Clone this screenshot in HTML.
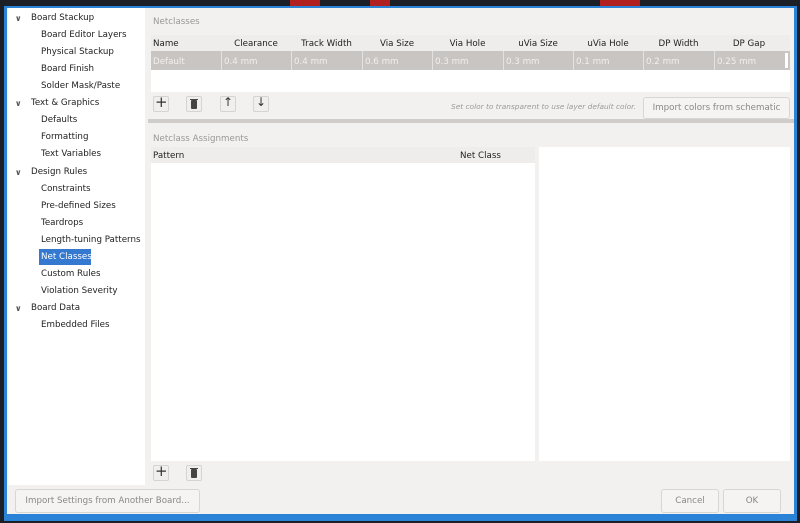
<!DOCTYPE html>
<html><head><style>
*{margin:0;padding:0;box-sizing:border-box}
body{width:800px;height:523px;background:#1c1f26;position:relative;overflow:hidden;font-family:"DejaVu Sans","Liberation Sans",sans-serif;font-size:8.7px;color:#222}
.a{position:absolute}
.dlg{left:4px;top:6px;width:793px;height:515px;background:#2a83d6}
.in{left:7px;top:8px;width:787px;height:506px;background:#f3f1f0}
.left{left:8px;top:8px;width:137px;height:477px;background:#fff}
.t{position:absolute;white-space:nowrap}
.chev{position:absolute;font-size:8px;color:#555;font-weight:bold}
.btn{position:absolute;border:1px solid #d8d5d2;border-radius:3px;background:#f6f4f3;color:#888;text-align:center}
.ib{position:absolute;width:16px;height:16px;border:1px solid #d6d3d0;border-radius:2px;background:#f1efee}
.th{position:absolute;top:39px;text-align:center;color:#222}
.td{position:absolute;top:57px;color:#f2f0ef}
.vl{position:absolute;top:51px;width:1px;height:19px;background:#e4e2e0}
</style></head><body>
<div class="a" style="left:290px;top:0;width:30px;height:6px;background:#b02020"></div>
<div class="a" style="left:370px;top:0;width:20px;height:6px;background:#b02020"></div>
<div class="a" style="left:600px;top:0;width:40px;height:6px;background:#b02020"></div>
<div class="a dlg"></div>
<div class="a in"></div>
<div class="a left"></div>

<span class="chev" style="left:15px;top:14px">&#8744;</span><span class="t" style="left:31px;top:13px">Board Stackup</span>
<span class="t" style="left:41px;top:30px">Board Editor Layers</span>
<span class="t" style="left:41px;top:47px">Physical Stackup</span>
<span class="t" style="left:41px;top:64px">Board Finish</span>
<span class="t" style="left:41px;top:81px">Solder Mask/Paste</span>
<span class="chev" style="left:15px;top:99px">&#8744;</span><span class="t" style="left:31px;top:98px">Text &amp; Graphics</span>
<span class="t" style="left:41px;top:115px">Defaults</span>
<span class="t" style="left:41px;top:132px">Formatting</span>
<span class="t" style="left:41px;top:149px">Text Variables</span>
<span class="chev" style="left:15px;top:168px">&#8744;</span><span class="t" style="left:31px;top:167px">Design Rules</span>
<span class="t" style="left:41px;top:184px">Constraints</span>
<span class="t" style="left:41px;top:201px">Pre-defined Sizes</span>
<span class="t" style="left:41px;top:218px">Teardrops</span>
<span class="t" style="left:41px;top:235px">Length-tuning Patterns</span>
<div class="a" style="left:39px;top:249px;width:52px;height:16px;background:#3478d0"></div>
<span class="t" style="left:41px;top:252px;color:#fff">Net Classes</span>
<span class="t" style="left:41px;top:269px">Custom Rules</span>
<span class="t" style="left:41px;top:286px">Violation Severity</span>
<span class="chev" style="left:15px;top:304px">&#8744;</span><span class="t" style="left:31px;top:303px">Board Data</span>
<span class="t" style="left:41px;top:320px">Embedded Files</span>

<span class="t" style="left:153px;top:17px;color:#9a9796">Netclasses</span>
<div class="a" style="left:151px;top:35px;width:639px;height:16px;background:#efedec"></div>
<div class="a" style="left:151px;top:51px;width:639px;height:19px;background:#c8c5c2"></div>
<div class="a" style="left:151px;top:70px;width:639px;height:22px;background:#fff"></div>
<span class="t" style="left:153px;top:39px">Name</span>
<span class="th" style="left:221px;width:70px">Clearance</span>
<span class="th" style="left:291px;width:71px">Track Width</span>
<span class="th" style="left:362px;width:70px">Via Size</span>
<span class="th" style="left:432px;width:71px">Via Hole</span>
<span class="th" style="left:503px;width:70px">uVia Size</span>
<span class="th" style="left:573px;width:70px">uVia Hole</span>
<span class="th" style="left:643px;width:71px">DP Width</span>
<span class="th" style="left:714px;width:70px">DP Gap</span>
<div class="vl" style="left:221px"></div><div class="vl" style="left:291px"></div><div class="vl" style="left:362px"></div><div class="vl" style="left:432px"></div><div class="vl" style="left:503px"></div><div class="vl" style="left:573px"></div><div class="vl" style="left:643px"></div><div class="vl" style="left:714px"></div>
<span class="td" style="left:153px">Default</span>
<span class="td" style="left:224px">0.4 mm</span>
<span class="td" style="left:294px">0.4 mm</span>
<span class="td" style="left:365px">0.6 mm</span>
<span class="td" style="left:435px">0.3 mm</span>
<span class="td" style="left:506px">0.3 mm</span>
<span class="td" style="left:576px">0.1 mm</span>
<span class="td" style="left:646px">0.2 mm</span>
<span class="td" style="left:717px">0.25 mm</span>
<div class="a" style="left:785px;top:53px;width:3px;height:15px;background:#fff"></div>

<div class="ib" style="left:153px;top:96px"></div><span class="t" style="left:155px;top:93px;font-size:15px;color:#333">+</span>
<div class="ib" style="left:186px;top:96px"></div><div class="a" style="left:191px;top:100px;width:6px;height:9px;background:#444;border-radius:1px"></div><div class="a" style="left:190px;top:99px;width:8px;height:1px;background:#444"></div>
<div class="ib" style="left:220px;top:96px"></div><span class="t" style="left:223px;top:95px;font-size:12px;color:#333">&#8593;</span>
<div class="ib" style="left:253px;top:96px"></div><span class="t" style="left:256px;top:95px;font-size:12px;color:#333">&#8595;</span>
<span class="t" style="left:451px;top:102px;font-style:italic;font-size:7.4px;color:#999">Set color to transparent to use layer default color.</span>
<div class="btn" style="left:643px;top:97px;width:147px;height:22px;line-height:20px">Import colors from schematic</div>
<div class="a" style="left:148px;top:119px;width:646px;height:4px;background:#cfccca"></div>

<span class="t" style="left:153px;top:134px;color:#9a9796">Netclass Assignments</span>
<div class="a" style="left:151px;top:147px;width:384px;height:16px;background:#efedec"></div>
<div class="a" style="left:151px;top:163px;width:384px;height:298px;background:#fff"></div>
<span class="t" style="left:153px;top:151px">Pattern</span>
<span class="t" style="left:460px;top:151px">Net Class</span>
<div class="a" style="left:539px;top:147px;width:251px;height:314px;background:#fff"></div>

<div class="ib" style="left:153px;top:465px"></div><span class="t" style="left:155px;top:462px;font-size:15px;color:#333">+</span>
<div class="ib" style="left:186px;top:465px"></div><div class="a" style="left:191px;top:469px;width:6px;height:9px;background:#444;border-radius:1px"></div><div class="a" style="left:190px;top:468px;width:8px;height:1px;background:#444"></div>

<div class="btn" style="left:15px;top:489px;width:185px;height:24px;line-height:22px">Import Settings from Another Board...</div>
<div class="btn" style="left:661px;top:489px;width:58px;height:24px;line-height:22px">Cancel</div>
<div class="btn" style="left:723px;top:489px;width:58px;height:24px;line-height:22px">OK</div>
</body></html>
